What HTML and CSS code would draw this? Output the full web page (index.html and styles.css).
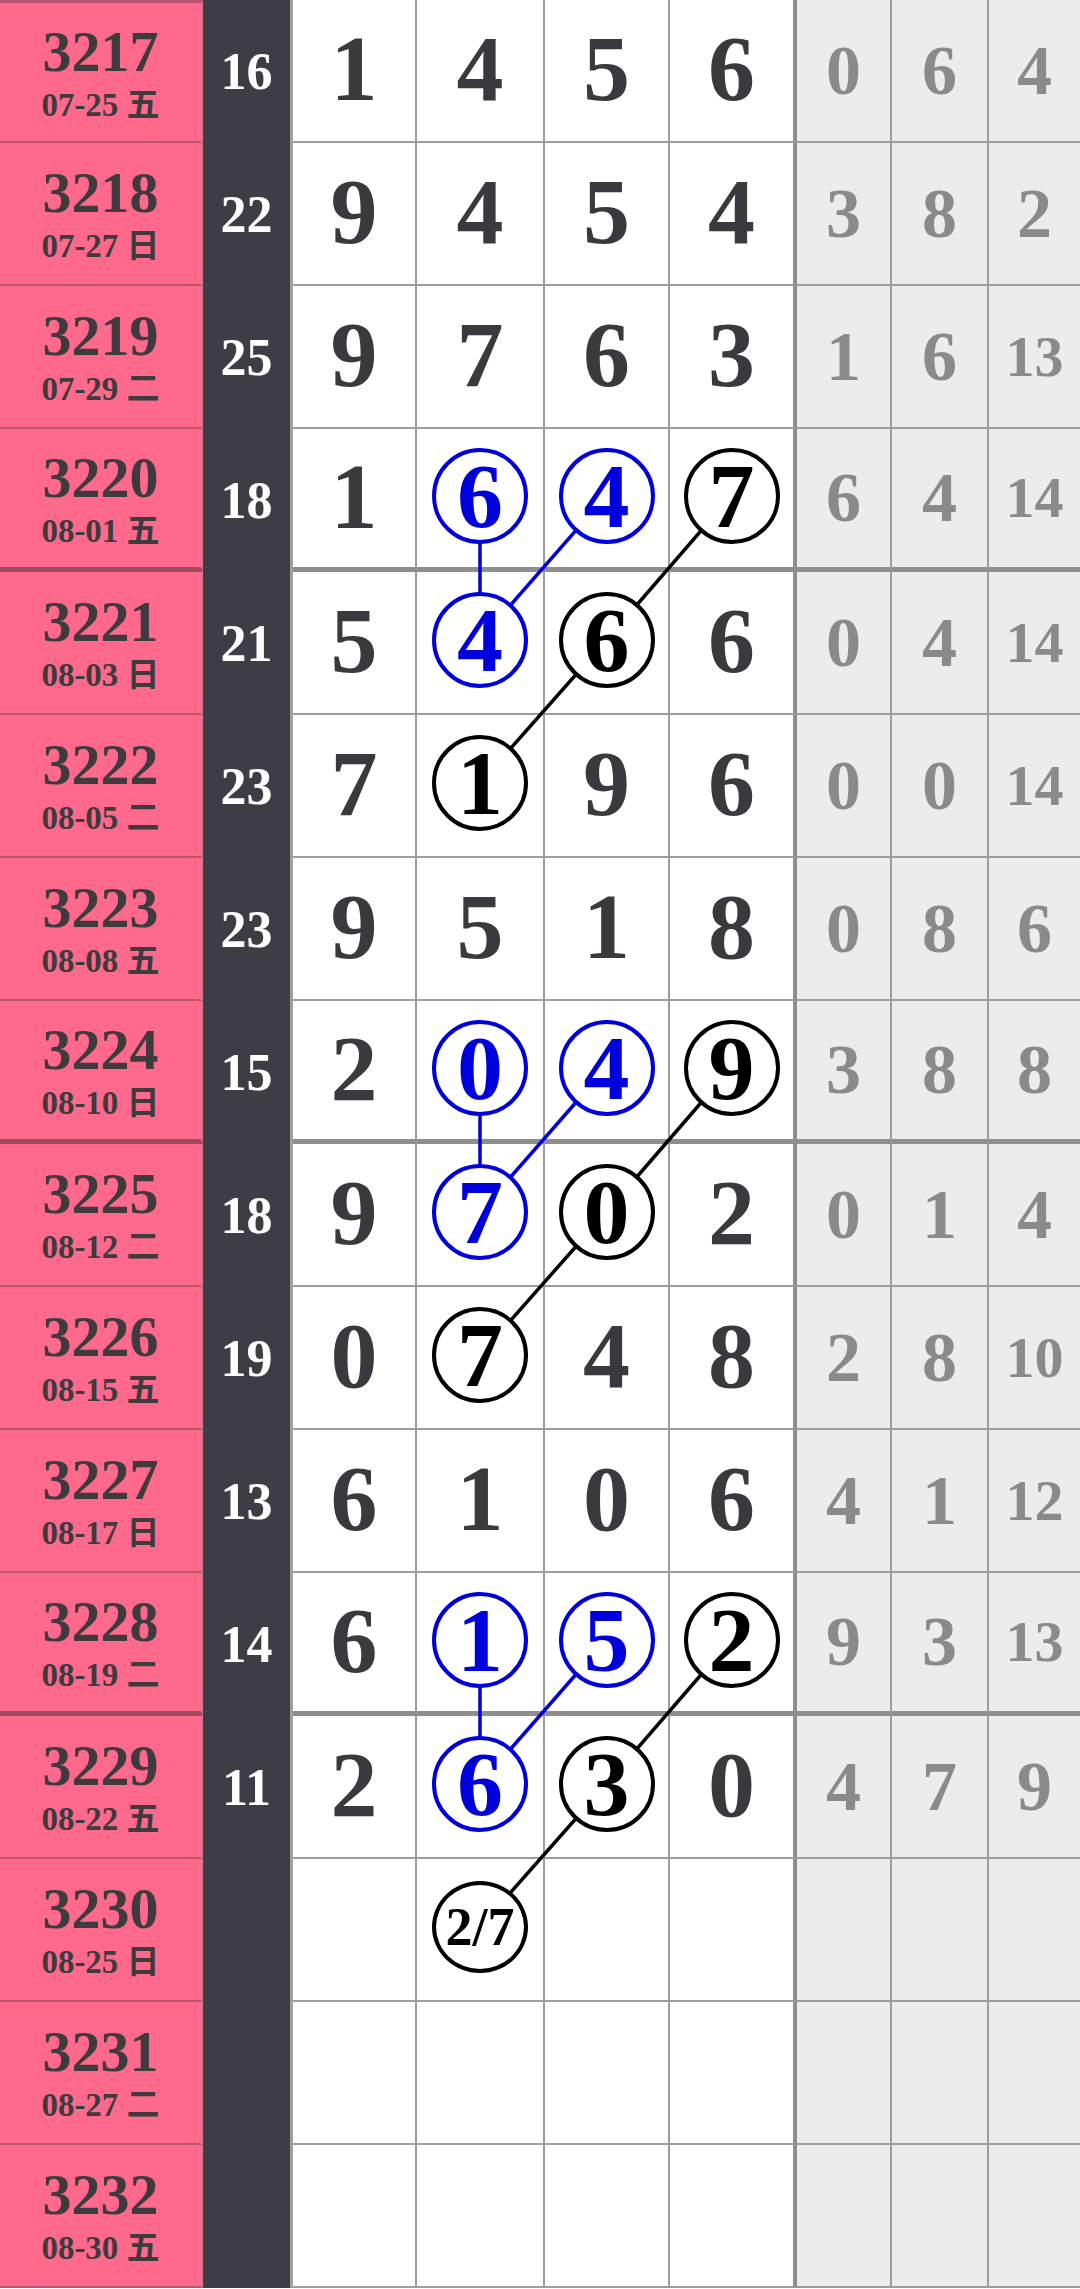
FILE: index.html
```html
<!DOCTYPE html>
<html lang="zh">
<head>
<meta charset="utf-8">
<title>走势图</title>
<link rel="stylesheet" href="styles.css">
</head>
<body>
<div class="board">
  <div class="row first">
    <div class="issue"><span class="no">3217</span><span class="date">07-25 五</span></div>
    <div class="sum">16</div>
    <div class="cell">1</div><div class="cell">4</div><div class="cell">5</div><div class="cell">6</div>
    <div class="gcell">0</div><div class="gcell">6</div><div class="gcell">4</div>
  </div>
  <div class="row">
    <div class="issue"><span class="no">3218</span><span class="date">07-27 日</span></div>
    <div class="sum">22</div>
    <div class="cell">9</div><div class="cell">4</div><div class="cell">5</div><div class="cell">4</div>
    <div class="gcell">3</div><div class="gcell">8</div><div class="gcell">2</div>
  </div>
  <div class="row">
    <div class="issue"><span class="no">3219</span><span class="date">07-29 二</span></div>
    <div class="sum">25</div>
    <div class="cell">9</div><div class="cell">7</div><div class="cell">6</div><div class="cell">3</div>
    <div class="gcell">1</div><div class="gcell">6</div><div class="gcell two">13</div>
  </div>
  <div class="row end">
    <div class="issue"><span class="no">3220</span><span class="date">08-01 五</span></div>
    <div class="sum">18</div>
    <div class="cell">1</div><div class="cell"><span class="ring blue">6</span></div><div class="cell"><span class="ring blue">4</span></div><div class="cell"><span class="ring">7</span></div>
    <div class="gcell">6</div><div class="gcell">4</div><div class="gcell two">14</div>
  </div>
  <div class="row">
    <div class="issue"><span class="no">3221</span><span class="date">08-03 日</span></div>
    <div class="sum">21</div>
    <div class="cell">5</div><div class="cell"><span class="ring blue">4</span></div><div class="cell"><span class="ring">6</span></div><div class="cell">6</div>
    <div class="gcell">0</div><div class="gcell">4</div><div class="gcell two">14</div>
  </div>
  <div class="row">
    <div class="issue"><span class="no">3222</span><span class="date">08-05 二</span></div>
    <div class="sum">23</div>
    <div class="cell">7</div><div class="cell"><span class="ring">1</span></div><div class="cell">9</div><div class="cell">6</div>
    <div class="gcell">0</div><div class="gcell">0</div><div class="gcell two">14</div>
  </div>
  <div class="row">
    <div class="issue"><span class="no">3223</span><span class="date">08-08 五</span></div>
    <div class="sum">23</div>
    <div class="cell">9</div><div class="cell">5</div><div class="cell">1</div><div class="cell">8</div>
    <div class="gcell">0</div><div class="gcell">8</div><div class="gcell">6</div>
  </div>
  <div class="row end">
    <div class="issue"><span class="no">3224</span><span class="date">08-10 日</span></div>
    <div class="sum">15</div>
    <div class="cell">2</div><div class="cell"><span class="ring blue">0</span></div><div class="cell"><span class="ring blue">4</span></div><div class="cell"><span class="ring">9</span></div>
    <div class="gcell">3</div><div class="gcell">8</div><div class="gcell">8</div>
  </div>
  <div class="row">
    <div class="issue"><span class="no">3225</span><span class="date">08-12 二</span></div>
    <div class="sum">18</div>
    <div class="cell">9</div><div class="cell"><span class="ring blue">7</span></div><div class="cell"><span class="ring">0</span></div><div class="cell">2</div>
    <div class="gcell">0</div><div class="gcell">1</div><div class="gcell">4</div>
  </div>
  <div class="row">
    <div class="issue"><span class="no">3226</span><span class="date">08-15 五</span></div>
    <div class="sum">19</div>
    <div class="cell">0</div><div class="cell"><span class="ring">7</span></div><div class="cell">4</div><div class="cell">8</div>
    <div class="gcell">2</div><div class="gcell">8</div><div class="gcell two">10</div>
  </div>
  <div class="row">
    <div class="issue"><span class="no">3227</span><span class="date">08-17 日</span></div>
    <div class="sum">13</div>
    <div class="cell">6</div><div class="cell">1</div><div class="cell">0</div><div class="cell">6</div>
    <div class="gcell">4</div><div class="gcell">1</div><div class="gcell two">12</div>
  </div>
  <div class="row end">
    <div class="issue"><span class="no">3228</span><span class="date">08-19 二</span></div>
    <div class="sum">14</div>
    <div class="cell">6</div><div class="cell"><span class="ring blue">1</span></div><div class="cell"><span class="ring blue">5</span></div><div class="cell"><span class="ring">2</span></div>
    <div class="gcell">9</div><div class="gcell">3</div><div class="gcell two">13</div>
  </div>
  <div class="row">
    <div class="issue"><span class="no">3229</span><span class="date">08-22 五</span></div>
    <div class="sum">11</div>
    <div class="cell">2</div><div class="cell"><span class="ring blue">6</span></div><div class="cell"><span class="ring">3</span></div><div class="cell">0</div>
    <div class="gcell">4</div><div class="gcell">7</div><div class="gcell">9</div>
  </div>
  <div class="row">
    <div class="issue"><span class="no">3230</span><span class="date">08-25 日</span></div>
    <div class="sum"></div>
    <div class="cell"></div><div class="cell"><span class="ring small">2/7</span></div><div class="cell"></div><div class="cell"></div>
    <div class="gcell"></div><div class="gcell"></div><div class="gcell"></div>
  </div>
  <div class="row">
    <div class="issue"><span class="no">3231</span><span class="date">08-27 二</span></div>
    <div class="sum"></div>
    <div class="cell"></div><div class="cell"></div><div class="cell"></div><div class="cell"></div>
    <div class="gcell"></div><div class="gcell"></div><div class="gcell"></div>
  </div>
  <div class="row">
    <div class="issue"><span class="no">3232</span><span class="date">08-30 五</span></div>
    <div class="sum"></div>
    <div class="cell"></div><div class="cell"></div><div class="cell"></div><div class="cell"></div>
    <div class="gcell"></div><div class="gcell"></div><div class="gcell"></div>
  </div>

  <svg class="links" width="1080" height="2289" viewBox="0 0 1080 2289">
    <g class="blue-lines">
      <line x1="480" y1="495.5" x2="480" y2="640"/>
      <line x1="606.5" y1="495.5" x2="480" y2="640"/>
      <line x1="480" y1="1067.5" x2="480" y2="1212"/>
      <line x1="606.5" y1="1067.5" x2="480" y2="1212"/>
      <line x1="480" y1="1639.5" x2="480" y2="1784"/>
      <line x1="606.5" y1="1639.5" x2="480" y2="1784"/>
    </g>
    <g class="black-lines">
      <polyline points="731.5,495.5 606.5,640 480,783"/>
      <polyline points="731.5,1067.5 606.5,1212 480,1355"/>
      <polyline points="731.5,1639.5 606.5,1784 480,1927"/>
    </g>
  </svg>
</div>
</body>
</html>
```

FILE: styles.css
```css
html, body {
  margin: 0;
  padding: 0;
  background: #ffffff;
}

.board {
  position: relative;
  width: 1080px;
  height: 2289px;
  overflow: hidden;
  font-family: "Liberation Serif", "Noto Sans CJK SC", serif;
  font-weight: bold;
}

.row {
  display: grid;
  grid-template-columns: 203px 90px 124px 128px 125px 127px 95px 97px 91px;
  height: 143px;
}

.row > div {
  box-sizing: border-box;
  display: flex;
  align-items: center;
  justify-content: center;
  border-bottom: 2px solid #9d9d9d;
}

.row.end > div {
  border-bottom: 5px solid #8e8e8e;
}

.issue {
  flex-direction: column;
  background: #ff6a8c;
  color: #3e3a3e;
  border-right: 2px solid #d07a90;
  border-bottom-color: #b85570 !important;
}

.row.first .issue {
  border-top: 3px solid #b85570;
}

.row.end .issue {
  border-bottom-color: #9e4a60 !important;
}

.no {
  font-size: 58px;
  line-height: 1;
}

.date {
  font-size: 33px;
  line-height: 1;
  margin-top: 8px;
}

.sum {
  background: #3e3d46;
  color: #ffffff;
  font-size: 52px;
  line-height: 1;
  border-right: 3px solid #a0a0a0;
  border-bottom: none !important;
}

.cell {
  background: #ffffff;
  color: #3a3a3e;
  font-size: 94px;
  line-height: 1;
  padding-bottom: 5px;
  border-right: 2px solid #9d9d9d;
}

.row > .cell:nth-child(6) {
  border-right: 4px solid #8e8e8e;
}

.gcell {
  background: #ececec;
  color: #8a8a8a;
  font-size: 70px;
  line-height: 1;
  border-right: 2px solid #9d9d9d;
}

.gcell:last-child {
  border-right: none;
}

.gcell.two {
  font-size: 58px;
}

.ring {
  position: relative;
  z-index: 2;
  box-sizing: border-box;
  width: 96px;
  height: 96px;
  border: 4px solid #000000;
  border-radius: 50%;
  background: #ffffff;
  color: #000000;
  display: flex;
  align-items: center;
  justify-content: center;
  font-size: 92px;
  line-height: 1;
}

.ring.blue {
  border-color: #0000dd;
  color: #0000dd;
}

.ring.small {
  font-size: 54px;
  height: 92px;
}

.links {
  position: absolute;
  top: 0;
  left: 0;
  z-index: 1;
  pointer-events: none;
}

.blue-lines line {
  stroke: #0000dd;
  stroke-width: 3.5;
}

.black-lines polyline {
  fill: none;
  stroke: #000000;
  stroke-width: 3.5;
}
```
